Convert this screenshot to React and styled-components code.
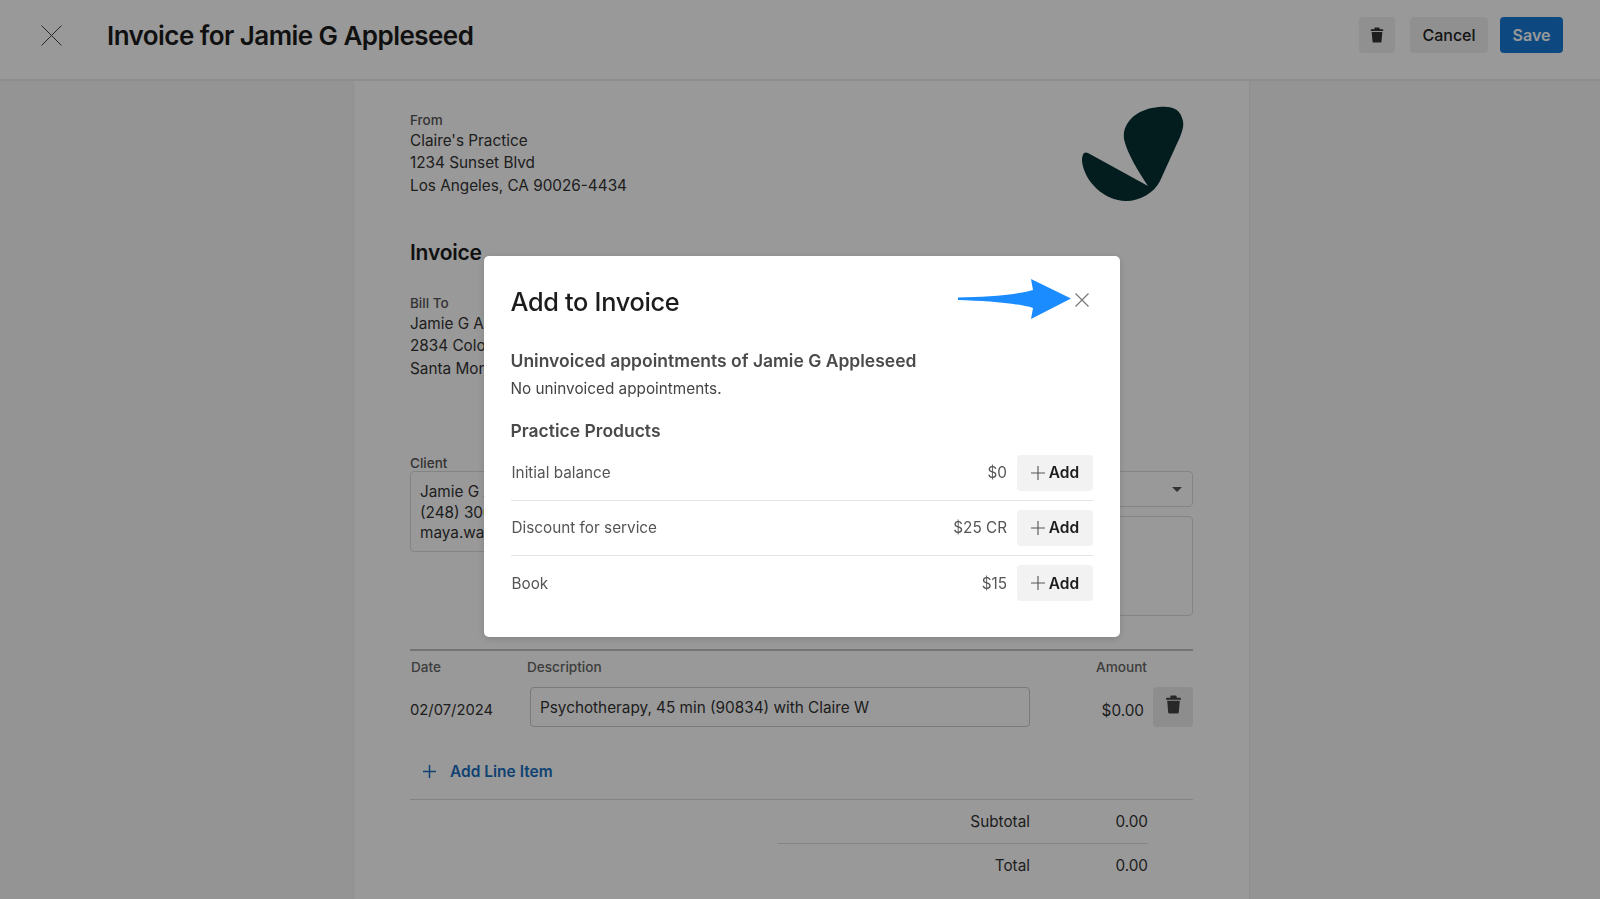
import React from 'react';
import styled, { createGlobalStyle } from 'styled-components';

const GlobalStyle = createGlobalStyle`
  html, body {
    margin: 0;
    height: 100%;
    overflow: hidden;
    background: #f7f7f7;
    font-family: Inter, "Liberation Sans", sans-serif;
    color: #222;
  }
  * {
    box-sizing: border-box;
  }
`;

const Header = styled.header`
  height: 81px;
  display: flex;
  align-items: center;
  padding: 0 37px 9px 41px;
  background: #fff;
  border-bottom: 2px solid #e9ecf0;
`;

const Title = styled.h1`
  margin: 1px 0 0 45px;
  flex: 1;
  font-size: 26px;
  font-weight: 600;
  letter-spacing: -0.55px;
  color: #1c1c1c;
`;

const HeaderActions = styled.div`
  display: flex;
`;

const GreyButton = styled.button`
  height: 36px;
  width: ${(p) => p.$width || 78}px;
  margin-right: ${(p) => p.$after || 0}px;
  border: none;
  border-radius: 4px;
  background: #f0f0f0;
  color: #222;
  font: 500 16px Inter, sans-serif;
  display: flex;
  align-items: center;
  justify-content: center;
`;

const SaveButton = styled.button`
  height: 36px;
  width: 63px;
  border: none;
  border-radius: 4px;
  background: #167bd5;
  color: #fff;
  font: 600 16px Inter, sans-serif;
`;

const Paper = styled.main`
  width: 897px;
  height: 818px;
  margin-left: 353px;
  padding: 31px 56px 0;
  background: #fff;
  border-left: 1px solid #f0f0f0;
  border-right: 1px solid #f0f0f0;
`;

const TopRow = styled.div`
  display: flex;
  justify-content: space-between;
  align-items: flex-start;
  height: 111px;
`;

const Logo = styled.svg`
  width: 102px;
  height: 96px;
  margin: -6px 9px 0 0;
  fill: #052f32;
`;

const Label = styled.div`
  margin-bottom: 2px;
  font-size: 13.500px;
  font-weight: 500;
  line-height: 16px;
  color: #555;
`;

const AddressLine = styled.div`
  font-size: 15.300px;
  line-height: 22.400px;
  color: #333;
`;

const InvoiceHeading = styled.h2`
  margin: 16px 0 28px;
  font-size: 21px;
  line-height: 28px;
  font-weight: 600;
  letter-spacing: -0.2px;
  color: #1c1c1c;
`;

const ClientRow = styled.div`
  display: flex;
  margin-top: 75px;
  gap: 20px;
`;

const ClientColumn = styled.div`
  width: 340px;
`;

const SideColumn = styled.div`
  flex: 1;
  display: flex;
  flex-direction: column;
  gap: 9px;
  padding-top: 16px;
`;

const ClientBox = styled.div`
  height: 81px;
  margin-top: -2px;
  padding: 10px 9px;
  border: 1px solid #ddd;
  border-radius: 4px;
  font-size: 15.300px;
  line-height: 20.500px;
  color: #333;
`;

const SelectBox = styled.div`
  height: 36px;
  display: flex;
  align-items: center;
  justify-content: flex-end;
  padding-right: 10px;
  border: 1px solid #ddd;
  border-radius: 4px;
`;

const Caret = styled.span`
  width: 0;
  height: 0;
  border-left: 5px solid transparent;
  border-right: 5px solid transparent;
  border-top: 5px solid #555;
`;

const NoteBox = styled.div`
  height: 100px;
  border: 1px solid #ddd;
  border-radius: 4px;
`;

const LineTable = styled.section`
  margin-top: 33px;
  border-top: 2px solid #c0c0c0;
`;

const ColumnLabels = styled.div`
  display: grid;
  grid-template-columns: 116px 1fr 60px;
  padding: 8px 46px 0 1px;
  font-size: 13.600px;
  font-weight: 500;
  line-height: 16px;
  color: #666;
`;

const AmountLabel = styled.span`
  text-align: right;
  white-space: nowrap;
`;

const LineRow = styled.div`
  display: flex;
  align-items: center;
  margin-top: 12px;
  font-size: 15.300px;
  color: #333;
`;

const LineDate = styled.span`
  width: 120px;
  padding-top: 6px;
  font-size: 14.800px;
`;

const DescriptionInput = styled.div`
  width: 500px;
  height: 40px;
  display: flex;
  align-items: center;
  padding-left: 9px;
  border: 1px solid #ccc;
  border-radius: 4px;
  color: #333;
`;

const LineAmount = styled.span`
  flex: 1;
  padding-top: 6px;
  padding-right: 9px;
  text-align: right;
`;

const TrashButton = styled.button`
  width: 40px;
  height: 40px;
  padding: 0 0 6px;
  border: none;
  border-radius: 4px;
  background: #ececec;
  display: flex;
  align-items: center;
  justify-content: center;
`;

const AddLine = styled.div`
  display: flex;
  align-items: center;
  gap: 14px;
  height: 73px;
  padding: 16px 0 0 13px;
  border-bottom: 1px solid #ddd;
  color: #1a6fc0;
  font-size: 15.500px;
  font-weight: 600;
`;

const TotalRow = styled.div`
  display: grid;
  grid-template-columns: 1fr 118px;
  width: 370px;
  margin-left: 368px;
  height: 44px;
  padding-bottom: ${(p) => (p.$ruled ? 0 : 2)}px;
  align-items: center;
  text-align: right;
  font-size: 15.300px;
  color: #333;
  border-bottom: ${(p) => (p.$ruled ? '1px solid #ddd' : 'none')};
`;

const Overlay = styled.div`
  position: fixed;
  inset: 0;
  padding: 256px 0 0 484px;
  background: rgba(0, 0, 0, 0.4);
`;

const Modal = styled.div`
  position: relative;
  width: 636px;
  height: 381px;
  padding: 27px 27px 0 26.500px;
  background: #fff;
  border-radius: 5px;
  box-shadow: 0 2px 8px rgba(0, 0, 0, 0.15);
`;

const ModalTop = styled.div`
  display: flex;
  align-items: center;
  justify-content: space-between;
  height: 36px;
`;

const ModalTitle = styled.h2`
  margin: 0;
  font-size: 25.300px;
  font-weight: 500;
  letter-spacing: -0.3px;
  color: #1c1c1c;
`;

const CloseIcon = styled.svg`
  display: block;
  margin: -3px 4px 0 0;
  stroke: #777;
  fill: none;
`;

const Arrow = styled.svg`
  position: absolute;
  left: 473px;
  top: 23px;
  fill: #1a8cff;
`;

const SectionTitle = styled.h3`
  margin: ${(p) => p.$top}px 0 0;
  font-size: 17.500px;
  line-height: 24px;
  font-weight: 600;
  color: #4a4a4a;
`;

const EmptyNote = styled.p`
  margin: 5px 0 0;
  font-size: 15.300px;
  line-height: 22px;
  color: #444;
`;

const ProductList = styled.div`
  margin-top: 2.500px;
`;

const ProductRow = styled.div`
  height: 55px;
  display: flex;
  align-items: center;
  padding-left: 1px;
  font-size: 15.300px;
  color: #555;
  border-bottom: ${(p) => (p.$last ? 'none' : '1px solid #e4e4e4')};
`;

const ProductName = styled.span`
  flex: 1;
`;

const AddButton = styled.button`
  width: 76px;
  height: 36px;
  margin-left: 10px;
  display: flex;
  align-items: center;
  justify-content: center;
  gap: 4px;
  border: none;
  border-radius: 4px;
  background: #f2f2f2;
  color: #1c1c1c;
  font: 600 15.500px Inter, sans-serif;
`;

const TrashIcon = ({ color, size }) => (
  <svg width={size} height={size} viewBox="0 0 16 18" fill={color}>
    <path d="M6 0.500h4a1 1 0 0 1 1 1V2.500h3.400a.6.6 0 0 1 .6.6V4.500H1V3.100a.6.6 0 0 1 .6-.6H5V1.500a1 1 0 0 1 1-1z" />
    <path d="M2 5.500h12l-1 11a1.200 1.200 0 0 1-1.200 1H4.200a1.200 1.200 0 0 1-1.200-1z" />
  </svg>
);

const PlusIcon = ({ size, color, width }) => (
  <svg width={size} height={size} viewBox="0 0 14 14" fill="none" stroke={color} strokeWidth={width}>
    <path d="M7 0v14M0 7h14" />
  </svg>
);

const products = [
  { name: 'Initial balance', price: '$0' },
  { name: 'Discount for service', price: '$25 CR' },
  { name: 'Book', price: '$15' },
];

const App = () => {
  return (
    <>
      <GlobalStyle />
      <Header>
        <svg width="21" height="21" viewBox="0 0 21 21" stroke="#444" strokeWidth="1" fill="none">
          <path d="M0.500 0.500l20 20M20.500 0.500l-20 20" />
        </svg>
        <Title>Invoice for Jamie G Appleseed</Title>
        <HeaderActions>
          <GreyButton $width={36} $after={15}>
            <TrashIcon color="#333" size={16} />
          </GreyButton>
          <GreyButton $width={78} $after={12}>Cancel</GreyButton>
          <SaveButton>Save</SaveButton>
        </HeaderActions>
      </Header>
      <Paper>
        <TopRow>
          <div>
            <Label>From</Label>
            <AddressLine>Claire's Practice</AddressLine>
            <AddressLine>1234 Sunset Blvd</AddressLine>
            <AddressLine>Los Angeles, CA 90026-4434</AddressLine>
          </div>
          <Logo viewBox="22 15 102 96">
            <path d="M88 95C78 80 67 62 64 48C62 32 76 20 92 17C108 14 120 15 123 30C124 36 122 40 120 46L100 90C94 102 80 110 66 110C44 110 24 90 22 70C22 63 24 60 28 62Z" />
          </Logo>
        </TopRow>
        <InvoiceHeading>Invoice</InvoiceHeading>
        <Label>Bill To</Label>
        <AddressLine>Jamie G Appleseed</AddressLine>
        <AddressLine>2834 Colorado Ave</AddressLine>
        <AddressLine>Santa Monica, CA</AddressLine>
        <ClientRow>
          <ClientColumn>
            <Label>Client</Label>
            <ClientBox>
              Jamie G Appleseed
              <br />
              (248) 306-1234
              <br />
              maya.wayne@example.com
            </ClientBox>
          </ClientColumn>
          <SideColumn>
            <SelectBox>
              <Caret />
            </SelectBox>
            <NoteBox />
          </SideColumn>
        </ClientRow>
        <LineTable>
          <ColumnLabels>
            <span>Date</span>
            <span>Description</span>
            <AmountLabel>Amount</AmountLabel>
          </ColumnLabels>
          <LineRow>
            <LineDate>02/07/2024</LineDate>
            <DescriptionInput>Psychotherapy, 45 min (90834) with Claire W</DescriptionInput>
            <LineAmount>$0.00</LineAmount>
            <TrashButton>
              <TrashIcon color="#444" size={19} />
            </TrashButton>
          </LineRow>
          <AddLine>
            <PlusIcon size={13} color="#1a6fc0" width={1.6} />
            Add Line Item
          </AddLine>
          <TotalRow $ruled>
            <span>Subtotal</span>
            <span>0.00</span>
          </TotalRow>
          <TotalRow>
            <span>Total</span>
            <span>0.00</span>
          </TotalRow>
        </LineTable>
      </Paper>
      <Overlay>
        <Modal>
          <ModalTop>
            <ModalTitle>Add to Invoice</ModalTitle>
            <CloseIcon width="14" height="14" viewBox="0 0 14 14" strokeWidth="1.200">
              <path d="M0.500 0.500l13 13M13.500 0.500l-13 13" />
            </CloseIcon>
          </ModalTop>
          <Arrow width="114" height="42" viewBox="0 0 114 42">
            <path d="M1 18.500C30 18 60 16 76 11L74 0L114 19.500L74 40L76 29C60 24 30 22 1 21Z" />
          </Arrow>
          <SectionTitle $top={30}>Uninvoiced appointments of Jamie G Appleseed</SectionTitle>
          <EmptyNote>No uninvoiced appointments.</EmptyNote>
          <SectionTitle $top={19}>Practice Products</SectionTitle>
          <ProductList>
            {products.map((product, i) => (
              <ProductRow key={product.name} $last={i === products.length - 1}>
                <ProductName>{product.name}</ProductName>
                <span>{product.price}</span>
                <AddButton>
                  <PlusIcon size={14} color="#555" width={1.1} />
                  Add
                </AddButton>
              </ProductRow>
            ))}
          </ProductList>
        </Modal>
      </Overlay>
    </>
  );
};

export default App;
